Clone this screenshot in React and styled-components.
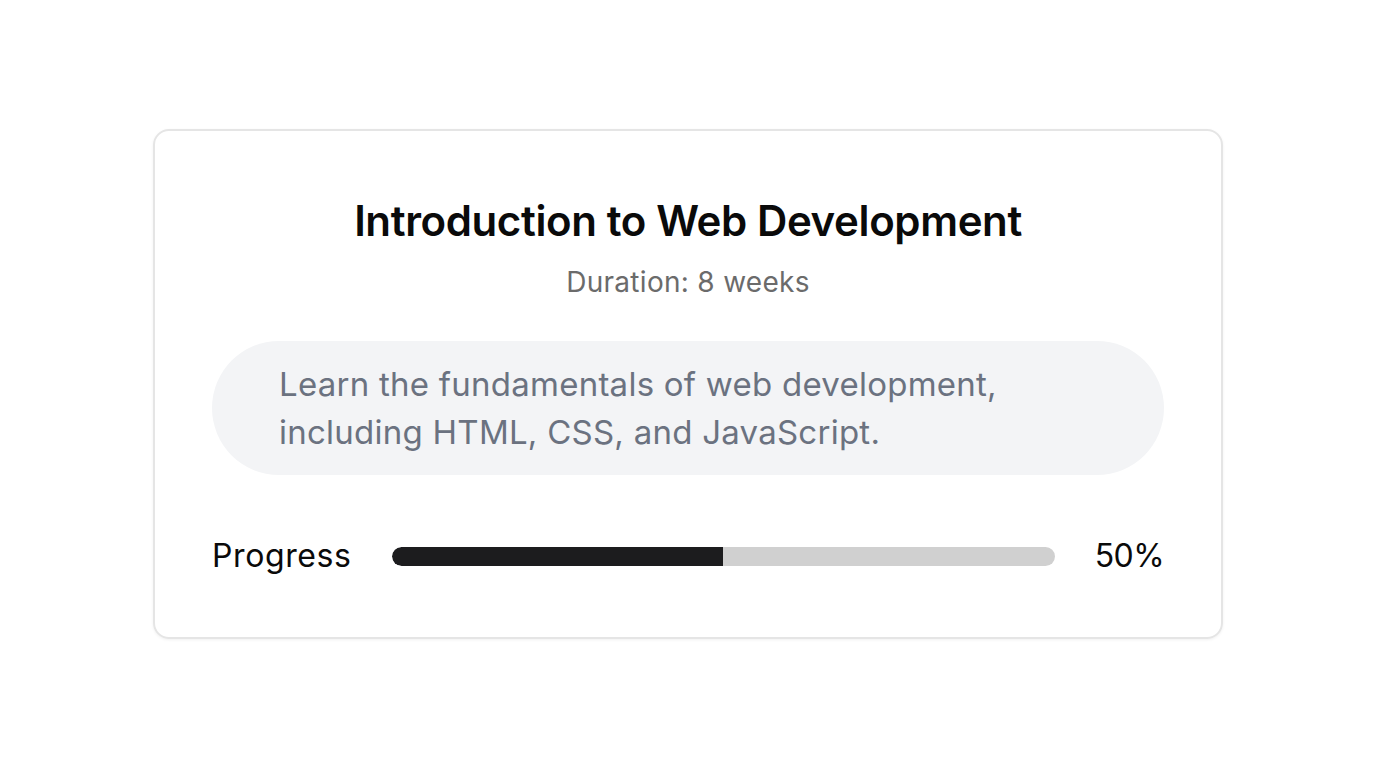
import React from "react";
import styled, { createGlobalStyle } from "styled-components";

const Global = createGlobalStyle`
  * { box-sizing: border-box; }
  html, body { margin: 0; padding: 0; background: #ffffff; }
  body { font-family: Inter, "Noto Sans", sans-serif; }
`;

const Page = styled.main`
  min-height: 768px;
  display: flex;
  align-items: center;
  justify-content: center;
`;

const Card = styled.section`
  width: 1070px;
  height: 510px;
  border: 2px solid #e5e5e5;
  border-radius: 16px;
  box-shadow: 0 1px 3px rgba(0, 0, 0, 0.06);
  padding: 56px 57px;
  display: flex;
  flex-direction: column;
  align-items: stretch;
`;

const Title = styled.h1`
  margin: 10px 0 0;
  font-size: 42px;
  line-height: 48px;
  font-weight: 600;
  letter-spacing: -0.38px;
  color: #0a0a0a;
  text-align: center;
`;

const Subtitle = styled.p`
  margin: 19px 0 0;
  font-size: 28px;
  line-height: 36px;
  letter-spacing: 0.3px;
  color: #6b6b6b;
  text-align: center;
`;

const Description = styled.p`
  margin: 41px 0 0;
  padding: 19px 67px;
  background: #f3f4f6;
  border-radius: 9999px;
  font-size: 33px;
  line-height: 48px;
  letter-spacing: 0.25px;
  color: #6b7280;
`;

const ProgressRow = styled.div`
  margin-top: 61px;
  display: flex;
  align-items: center;
  gap: 40px;
`;

const Label = styled.span`
  font-size: 32px;
  line-height: 40px;
  letter-spacing: ${(p) => (p.$numeric ? "-0.6px" : "0.6px")};
  color: #0a0a0a;
`;

const Track = styled.div`
  flex: 1;
  height: 19px;
  background: #d0d0d0;
  border-radius: 9999px;
  overflow: hidden;
`;

const Fill = styled.div`
  height: 100%;
  background: #1c1c1e;
  border-radius: 9999px 0 0 9999px;
`;

export default function App() {
  const progress = 50;
  return (
    <>
      <Global />
      <Page>
        <Card>
          <Title>Introduction to Web Development</Title>
          <Subtitle>Duration: 8 weeks</Subtitle>
          <Description>
            Learn the fundamentals of web development, including HTML, CSS, and JavaScript.
          </Description>
          <ProgressRow>
            <Label>Progress</Label>
            <Track>
              <Fill style={{ width: `${progress}%` }} />
            </Track>
            <Label $numeric>{progress}%</Label>
          </ProgressRow>
        </Card>
      </Page>
    </>
  );
}
